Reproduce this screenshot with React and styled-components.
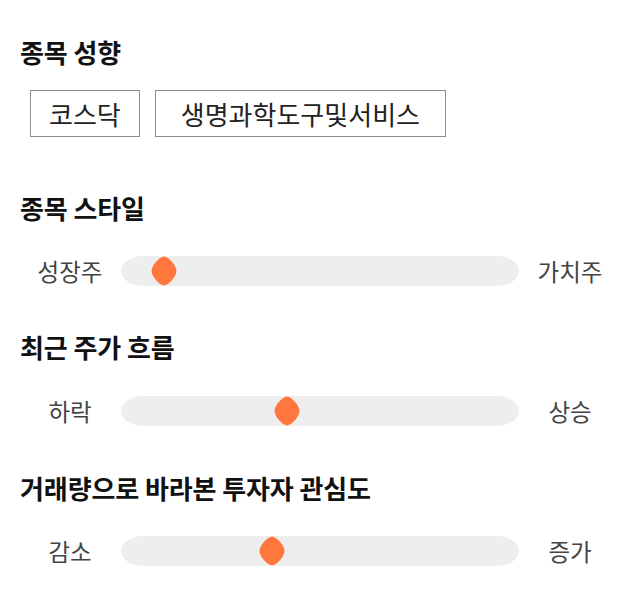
import React from "react";
import styled, { createGlobalStyle } from "styled-components";

const GlobalStyle = createGlobalStyle`
  html, body {
    margin: 0;
    padding: 0;
    background: #ffffff;
  }
  body {
    font-family: "Noto Sans CJK KR", "Noto Sans", sans-serif;
  }
`;

const Page = styled.div`
  width: 640px;
  box-sizing: border-box;
  padding: 36px 20px 0 20px;
  display: flex;
  flex-direction: column;
`;

const Section = styled.section`
  display: flex;
  flex-direction: column;
  margin-bottom: ${(p) => p.$gap}px;
`;

const Heading = styled.h2`
  margin: 0 0 ${(p) => p.$below}px 0;
  padding-left: 0;
  font-size: 26px;
  line-height: 32px;
  font-weight: 700;
  color: #111111;
  letter-spacing: -0.1px;
`;

const TagList = styled.div`
  display: flex;
  gap: 15px;
  padding-left: 10px;
`;

const Tag = styled.span`
  box-sizing: border-box;
  height: 47px;
  padding: 0 ${(p) => p.$pad}px;
  display: inline-flex;
  align-items: center;
  border: 1px solid #8c8c8c;
  font-size: 26px;
  font-weight: 400;
  color: #222222;
`;

const SliderRow = styled.div`
  display: grid;
  grid-template-columns: 100px 1fr 100px;
  align-items: center;
`;

const EndLabel = styled.span`
  text-align: center;
  font-size: 23.5px;
  line-height: 30px;
  color: #444444;
`;

const Track = styled.div`
  position: relative;
  height: 30px;
  margin-left: 1px;
  margin-right: 1px;
  background: #eeeeee;
  border-radius: 22px / 15px;
`;

const Thumb = styled.svg`
  position: absolute;
  top: 0;
  width: 26px;
  height: 30px;
  display: block;
`;

function Slider({ left, right, value }) {
  return (
    <SliderRow>
      <EndLabel>{left}</EndLabel>
      <Track>
        <Thumb
          viewBox="0 0 26 30"
          style={{ left: `calc((100% - 26px) * ${value / 100})` }}
        >
          <path
            d="M13 0.5 C17.5 0.5 25.5 9.5 25.5 15 C25.5 20.5 17.5 29.5 13 29.5 C8.5 29.5 0.5 20.5 0.5 15 C0.5 9.5 8.5 0.5 13 0.5 Z"
            fill="#ff773d"
          />
        </Thumb>
      </Track>
      <EndLabel>{right}</EndLabel>
    </SliderRow>
  );
}

export default function App() {
  return (
    <>
      <GlobalStyle />
      <Page>
        <Section $gap={55}>
          <Heading $below={22}>종목 성향</Heading>
          <TagList>
            <Tag $pad={18}>코스닥</Tag>
            <Tag $pad={25}>생명과학도구및서비스</Tag>
          </TagList>
        </Section>
        <Section $gap={45}>
          <Heading $below={32}>종목 스타일</Heading>
          <Slider left="성장주" right="가치주" value={8} />
        </Section>
        <Section $gap={46}>
          <Heading $below={33}>최근 주가 흐름</Heading>
          <Slider left="하락" right="상승" value={41} />
        </Section>
        <Section $gap={0}>
          <Heading $below={32}>거래량으로 바라본 투자자 관심도</Heading>
          <Slider left="감소" right="증가" value={37} />
        </Section>
      </Page>
    </>
  );
}
